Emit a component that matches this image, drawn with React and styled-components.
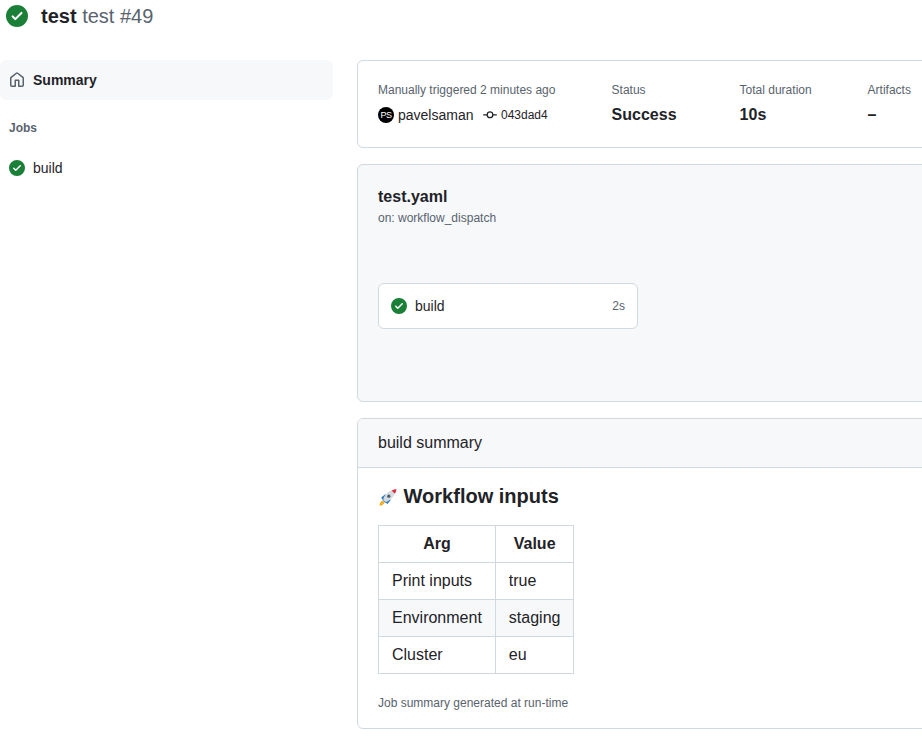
import React from "react";
import styled, { createGlobalStyle } from "styled-components";

const Global = createGlobalStyle`
  html, body { margin: 0; padding: 0; background: #fff; overflow: hidden; width: 922px; height: 738px; }
  body { font-family: "Liberation Sans", Arial, sans-serif; color: #1f2328; font-size: 14px; }
  * { box-sizing: border-box; }
`;

const Page = styled.div`
  width: 1240px;
`;
const Header = styled.header`
  display: flex;
  align-items: center;
  height: 32px;
  padding-left: 6px;
  gap: 13px;
`;
const Title = styled.h1`
  margin: 0;
  font-size: 20px;
  line-height: 32px;
  font-weight: 700;
  span { font-weight: 400; color: #59636e; }
`;
const Layout = styled.div`
  display: flex;
  margin-top: 28px;
  gap: 24px;
`;
const Sidebar = styled.nav`
  width: 333px;
  flex: none;
`;
const SummaryLink = styled.div`
  display: flex;
  align-items: center;
  height: 40px;
  padding-left: 9px;
  gap: 8px;
  background: #f6f8fa;
  border-radius: 6px;
  font-weight: 700;
  color: #1f2328;
`;
const JobsLabel = styled.div`
  font-size: 12px;
  font-weight: 700;
  line-height: 16px;
  color: #59636e;
  padding-left: 9px;
  margin-top: 20px;
`;
const JobLink = styled.div`
  display: flex;
  align-items: center;
  height: 32px;
  margin-top: 16px;
  padding-left: 9px;
  gap: 8px;
`;
const Main = styled.main`
  flex: 1;
  display: flex;
  flex-direction: column;
  gap: 16px;
`;
const Card = styled.section`
  border: 1px solid #d1d9e0;
  border-radius: 6px;
  background: ${(p) => (p.$muted ? "#f6f8fa" : "#fff")};
  overflow: hidden;
`;
const StatsCard = styled(Card)`
  display: flex;
  height: 88px;
  padding: 20px 20px 0;
`;
const Stat = styled.div`
  width: ${(p) => p.$w}px;
  flex: none;
`;
const StatLabel = styled.div`
  font-size: 12px;
  line-height: 18px;
  color: #59636e;
`;
const StatValue = styled.div`
  font-size: 16px;
  font-weight: 700;
  line-height: 24px;
  margin-top: 4px;
`;
const Actor = styled.div`
  display: flex;
  align-items: center;
  height: 24px;
  margin-top: 4px;
`;
const Avatar = styled.span`
  width: 16px;
  height: 16px;
  border-radius: 50%;
  background: #000;
  color: #fff;
  font-size: 9px;
  font-weight: 400;
  line-height: 16px;
  text-align: center;
  letter-spacing: -0.5px;
  flex: none;
`;
const ActorName = styled.span`
  margin-left: 4px;
  font-size: 14px;
  color: #1f2328;
`;
const Commit = styled.span`
  display: inline-flex;
  align-items: center;
  gap: 4.5px;
  margin-left: 9px;
  font-size: 12px;
  color: #1f2328;
  svg { fill: #1f2328; }
`;
const GraphCard = styled(Card)`
  height: 238px;
  padding: 20px;
`;
const GraphTitle = styled.div`
  font-size: 16px;
  font-weight: 700;
  line-height: 24px;
`;
const GraphSub = styled.div`
  font-size: 12px;
  line-height: 18px;
  color: #59636e;
`;
const JobNode = styled.div`
  display: flex;
  align-items: center;
  width: 260px;
  height: 46px;
  margin-top: 56px;
  padding: 0 12px;
  gap: 8px;
  background: #fff;
  border: 1px solid #d1d9e0;
  border-radius: 6px;
`;
const JobName = styled.span`
  flex: 1;
`;
const JobTime = styled.span`
  font-size: 12px;
  color: #59636e;
`;
const SummaryHead = styled.div`
  height: 49px;
  display: flex;
  align-items: center;
  padding-left: 20px;
  font-size: 16px;
  background: #f6f8fa;
  border-bottom: 1px solid #d1d9e0;
`;
const SummaryBody = styled.div`
  padding: 16px 20px 16px;
`;
const Heading = styled.h3`
  display: flex;
  align-items: center;
  gap: 5.6px;
  margin: 0;
  font-size: 20px;
  line-height: 25px;
  font-weight: 700;
`;
const Table = styled.table`
  border-collapse: collapse;
  margin-top: 16px;
  font-size: 16px;
  line-height: 24px;
`;
const Th = styled.th`
  border: 1px solid #d1d9e0;
  padding: 6px 13px;
  font-weight: 700;
  text-align: center;
`;
const Td = styled.td`
  border: 1px solid #d1d9e0;
  padding: 6px 13px;
`;
const Tr = styled.tr`
  background: ${(p) => (p.$alt ? "#f6f8fa" : "#fff")};
`;
const Footnote = styled.div`
  margin-top: 20px;
  font-size: 12px;
  line-height: 18px;
  color: #59636e;
`;

const CheckIcon = ({ size = 16 }) => (
  <svg width={size} height={size} viewBox="0 0 16 16" fill="#1a7f37" style={{ flex: "none" }}>
    <path d="M8 16A8 8 0 1 1 8 0a8 8 0 0 1 0 16Zm3.78-9.72a.751.751 0 0 0-.018-1.042.751.751 0 0 0-1.042-.018L6.75 9.19 5.28 7.72a.751.751 0 0 0-1.042.018.751.751 0 0 0-.018 1.042l2 2a.75.75 0 0 0 1.06 0Z" />
  </svg>
);
const HomeIcon = () => (
  <svg width="16" height="16" viewBox="0 0 16 16" fill="#59636e" style={{ flex: "none" }}>
    <path d="M6.906.664a1.749 1.749 0 0 1 2.187 0l5.25 4.2c.415.332.657.835.657 1.367v7.019A1.75 1.75 0 0 1 13.25 15h-3.5a.75.75 0 0 1-.75-.75V9H7v5.25a.75.75 0 0 1-.75.75h-3.5A1.75 1.75 0 0 1 1 13.25V6.23c0-.531.242-1.034.657-1.366l5.25-4.2Zm1.25 1.171a.25.25 0 0 0-.312 0l-5.25 4.2a.25.25 0 0 0-.094.196v7.019c0 .138.112.25.25.25H5.5V8.25a.75.75 0 0 1 .75-.75h3.5a.75.75 0 0 1 .75.75v5.25h2.75a.25.25 0 0 0 .25-.25V6.23a.25.25 0 0 0-.094-.195Z" />
  </svg>
);
const CommitIcon = () => (
  <svg width="14" height="14" viewBox="0 0 16 16">
    <path d="M11.93 8.5a4.002 4.002 0 0 1-7.86 0H.75a.75.75 0 0 1 0-1.5h3.32a4.002 4.002 0 0 1 7.86 0h3.32a.75.75 0 0 1 0 1.5Zm-1.43-.75a2.5 2.5 0 1 0-5 0 2.5 2.5 0 0 0 5 0Z" />
  </svg>
);
const RocketIcon = () => (
  <svg width="20" height="20" viewBox="0 0 20 20" style={{ flex: "none" }}>
    <path d="M1.6 18.6c.1-2.3 1-3.9 2.6-4.8l2.2 2.2c-.9 1.6-2.5 2.5-4.8 2.6Z" fill="#f59e0b" />
    <path d="M3 17.3c.2-.9.6-1.6 1.3-2.1l.7.7c-.5.7-1.2 1.1-2 1.4Z" fill="#fde047" />
    <path d="M3.2 10.6 7.6 7l-.8 5.6-1.8 1Z" fill="#2f7fc1" />
    <path d="m9.6 16.9 3.5-4.5-5.6.9-1 1.7Z" fill="#2f7fc1" />
    <path d="M5.2 12.4C6.4 8 10 4.4 14.4 3.2l2.5 2.5c-1.2 4.4-4.8 8-9.2 9.2Z" fill="#d3dae0" />
    <path d="M13.6 3.5c1.6-.9 3.2-1.4 4.9-1.6-.2 1.7-.7 3.3-1.6 4.9Z" fill="#dd2e44" />
    <circle cx="10.8" cy="9.2" r="1.6" fill="#4a5a68" />
    <path d="m5.2 12.4 2.5 2.5-1.3.5-1.7-1.7Z" fill="#8899a6" />
  </svg>
);

export default function App() {
  return (
    <Page>
      <Global />
      <Header>
        <CheckIcon size={22} />
        <Title>
          test <span>test #49</span>
        </Title>
      </Header>
      <Layout>
        <Sidebar>
          <SummaryLink>
            <HomeIcon />
            Summary
          </SummaryLink>
          <JobsLabel>Jobs</JobsLabel>
          <JobLink>
            <CheckIcon />
            build
          </JobLink>
        </Sidebar>
        <Main>
          <StatsCard>
            <Stat $w={233.6}>
              <StatLabel>Manually triggered 2 minutes ago</StatLabel>
              <Actor>
                <Avatar>PS</Avatar>
                <ActorName>pavelsaman</ActorName>
                <Commit>
                  <CommitIcon />
                  043dad4
                </Commit>
              </Actor>
            </Stat>
            <Stat $w={128}>
              <StatLabel>Status</StatLabel>
              <StatValue>Success</StatValue>
            </Stat>
            <Stat $w={128}>
              <StatLabel>Total duration</StatLabel>
              <StatValue>10s</StatValue>
            </Stat>
            <Stat $w={128}>
              <StatLabel>Artifacts</StatLabel>
              <StatValue>–</StatValue>
            </Stat>
          </StatsCard>
          <GraphCard $muted>
            <GraphTitle>test.yaml</GraphTitle>
            <GraphSub>on: workflow_dispatch</GraphSub>
            <JobNode>
              <CheckIcon />
              <JobName>build</JobName>
              <JobTime>2s</JobTime>
            </JobNode>
          </GraphCard>
          <Card>
            <SummaryHead>build summary</SummaryHead>
            <SummaryBody>
              <Heading>
                <RocketIcon />
                Workflow inputs
              </Heading>
              <Table>
                <thead>
                  <Tr>
                    <Th>Arg</Th>
                    <Th>Value</Th>
                  </Tr>
                </thead>
                <tbody>
                  <Tr>
                    <Td>Print inputs</Td>
                    <Td>true</Td>
                  </Tr>
                  <Tr $alt>
                    <Td>Environment</Td>
                    <Td>staging</Td>
                  </Tr>
                  <Tr>
                    <Td>Cluster</Td>
                    <Td>eu</Td>
                  </Tr>
                </tbody>
              </Table>
              <Footnote>Job summary generated at run-time</Footnote>
            </SummaryBody>
          </Card>
        </Main>
      </Layout>
    </Page>
  );
}
